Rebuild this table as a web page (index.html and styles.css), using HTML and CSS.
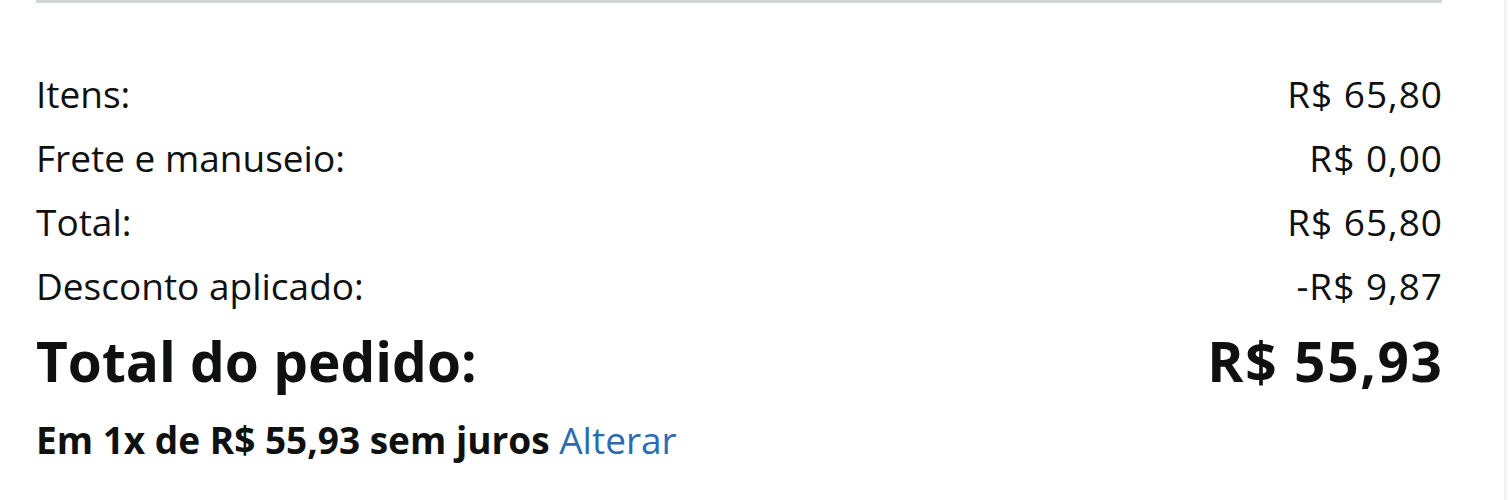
FILE: index.html
```html
<!DOCTYPE html>
<html lang="pt-BR">
<head>
<meta charset="utf-8">
<link rel="stylesheet" href="styles.css">
</head>
<body>
<div class="page">
  <div class="summary">
    <div class="row"><span>Itens:</span><span class="amount">R$ 65,80</span></div>
    <div class="row"><span>Frete e manuseio:</span><span class="amount">R$ 0,00</span></div>
    <div class="row"><span>Total:</span><span class="amount">R$ 65,80</span></div>
    <div class="row"><span>Desconto aplicado:</span><span class="amount">-R$ 9,87</span></div>
    <div class="row grand"><span>Total do pedido:</span><span class="amount">R$ 55,93</span></div>
    <div class="installments">Em 1x de R$ 55,93 sem juros <a class="link" href="#">Alterar</a></div>
  </div>
</div>
</body>
</html>
```

FILE: styles.css
```css
html, body {
  margin: 0;
  padding: 0;
  background: #ffffff;
}
.page {
  width: 1507px;
  height: 500px;
  border-right: 3px solid #f2f2f2;
  box-sizing: border-box;
  font-family: "Open Sans", "Liberation Sans", sans-serif;
  color: #0f1111;
}
.summary {
  margin-left: 36px;
  width: 1406px;
  border-top: 3px solid #d0d6d6;
  padding-top: 59px;
}
.row {
  display: flex;
  justify-content: space-between;
  font-size: 37px;
  line-height: 64px;
}
.amount {
  letter-spacing: 1px;
  margin-right: -1px;
}
.grand {
  font-size: 55px;
  font-weight: 700;
  line-height: 76px;
  margin-top: 5px;
}
.grand .amount {
  letter-spacing: 1.6px;
  margin-right: -1.6px;
}
.installments {
  font-size: 37px;
  font-weight: 700;
  line-height: 64px;
  margin-top: 9px;
}
.link {
  color: #2a6cb0;
  font-weight: 400;
  text-decoration: none;
}
```
